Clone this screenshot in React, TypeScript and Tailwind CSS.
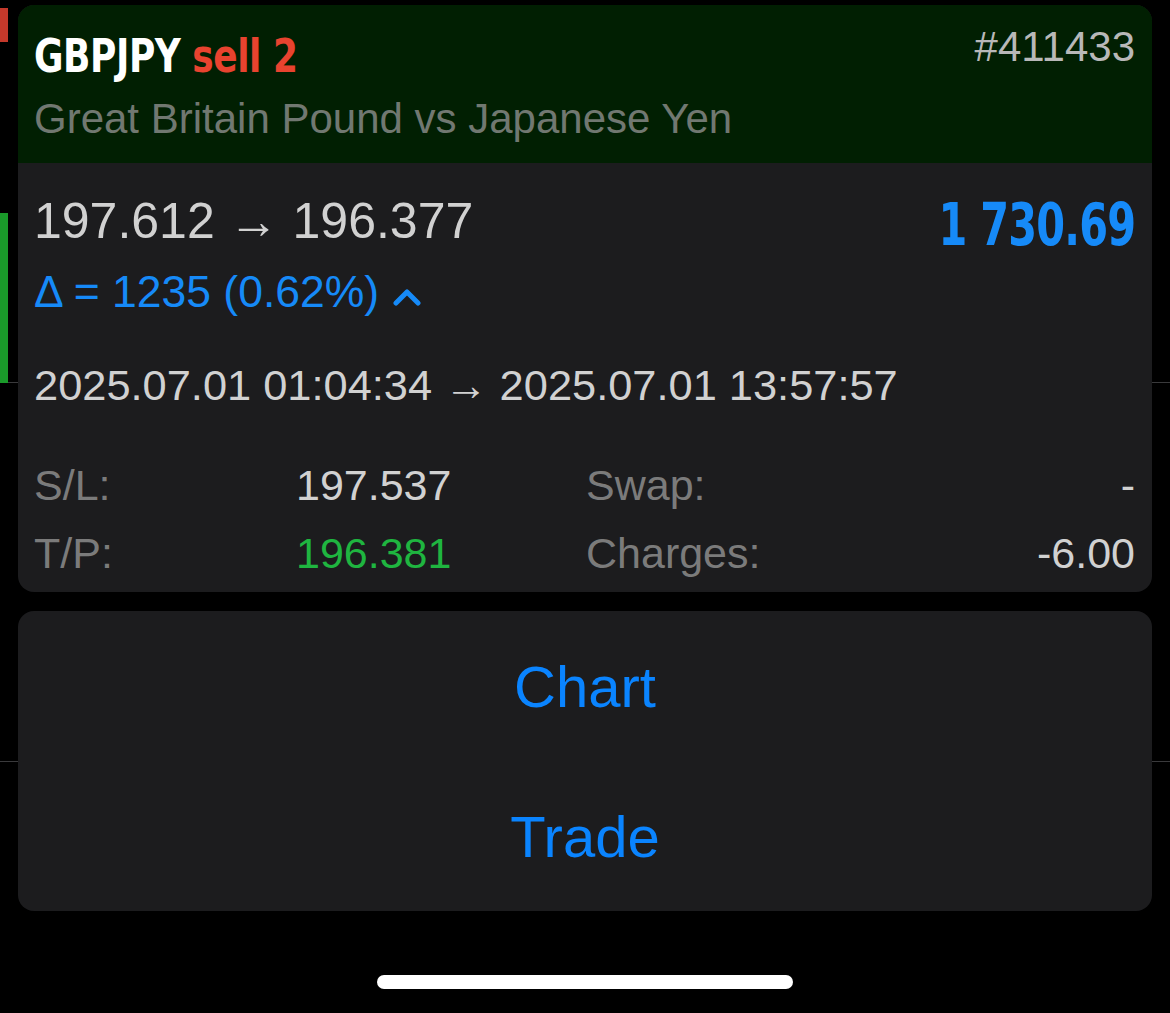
const body = { fontFamily: '"Liberation Sans", Arial, sans-serif' }
const narrow = { fontFamily: '"DejaVu Sans Condensed", "DejaVu Sans", sans-serif', fontStretch: "condensed" as const }

const Chevron = () => (
  <svg width="28" height="18" viewBox="0 0 28 18" className="ml-[14px] mt-[21px] shrink-0">
    <polyline points="3,15 14,4 25,15" fill="none" stroke="#168af8" strokeWidth="5" strokeLinecap="round" strokeLinejoin="round" />
  </svg>
)

const DetailRow = ({ label, value, valueClass, label2, value2 }: { label: string; value: string; valueClass: string; label2: string; value2: string }) => (
  <div className="grid h-[50px] grid-cols-[262px_290px_1fr_auto] items-center text-[43px] leading-[50px]">
    <span className="text-[#7b7b7b]">{label}</span>
    <span className={valueClass}>{value}</span>
    <span className="text-[#7b7b7b]">{label2}</span>
    <span className="text-right text-[#d1d1d1]">{value2}</span>
  </div>
)

const App = () => {
  return (
    <div className="relative h-[1013px] w-[1170px] overflow-hidden bg-black" style={body}>
      {/* list underneath the sheet */}
      <div className="flex flex-col">
        <div className="relative h-[383px] border-b border-[#3a3a3c]">
          <div className="flex h-[8px] overflow-hidden pl-[34px] pr-[20px] text-[43px] leading-[48px] text-[#e5e5e5]">
            <div className="-mt-[40px] flex w-full justify-between">
              <span>1887.09.11 → 197.762.88</span>
              <span>2025.06.27 16:00:02</span>
            </div>
          </div>
          <div className="flex flex-col">
            <div className="h-[34px] w-[8px] bg-[#c4392b]" />
            <div className="mt-[171px] h-[170px] w-[8px] bg-[#1a9a2a]" />
          </div>
        </div>
        <div className="h-[379px] border-b border-[#3a3a3c]" />
      </div>

      {/* action sheet */}
      <div className="absolute inset-0 flex flex-col px-[18px] pt-[5px]">
        <section className="overflow-hidden rounded-[16px] bg-[#1c1c1e]">
          <header className="h-[158px] bg-[#011f02] pl-[16px] pr-[17px] pt-[18px]">
            <div className="flex items-start justify-between">
              <div
                className="mt-[7px] flex origin-left scale-x-[0.85] gap-[14px] text-[47px] font-bold leading-[52px] tracking-[-0.5px]"
                style={narrow}>
                <span className="text-white">GBPJPY</span>
                <span className="text-[#e8432f]">sell 2</span>
              </div>
              <span className="text-[42px] leading-[48px] text-[#b8b8b8]">#411433</span>
            </div>
            <p className="mt-[13px] text-[42px] leading-[48px] text-[#717871]">Great Britain Pound vs Japanese Yen</p>
          </header>

          <div className="pb-[14px] pl-[16px] pr-[17px] pt-[30px]">
            <div className="flex items-start justify-between">
              <div className="flex flex-col">
                <span className="text-[50px] leading-[56px] text-[#d1d1d1]">197.612 → 196.377</span>
                <div className="mt-[18px] flex items-start">
                  <span className="text-[44.5px] leading-[50px] text-[#168af8]">Δ = 1235 (0.62%)</span>
                  <Chevron />
                </div>
              </div>
              <span
                className="origin-right scale-x-[0.78] text-[59px] font-bold leading-[64px] tracking-[-1px] text-[#168af8]"
                style={narrow}>
                1 730.69
              </span>
            </div>

            <p className="mt-[43px] text-[43.4px] leading-[50px] text-[#d1d1d1]">2025.07.01 01:04:34 → 2025.07.01 13:57:57</p>

            <div className="mt-[50px] flex flex-col gap-[18px]">
              <DetailRow label="S/L:" value="197.537" valueClass="text-[#d1d1d1]" label2="Swap:" value2="-" />
              <DetailRow label="T/P:" value="196.381" valueClass="text-[#1fb540]" label2="Charges:" value2="-6.00" />
            </div>
          </div>
        </section>

        <section className="mt-[19px] flex flex-col rounded-[16px] bg-[#1c1c1e]">
          <button className="h-[150px] text-[58px] text-[#0a84ff]">Chart</button>
          <button className="h-[150px] text-[58px] text-[#0a84ff]">Trade</button>
        </section>

        <div className="mt-[64px] flex justify-center">
          <div className="h-[14px] w-[416px] rounded-full bg-white" />
        </div>
      </div>
    </div>
  )
}

export default App
